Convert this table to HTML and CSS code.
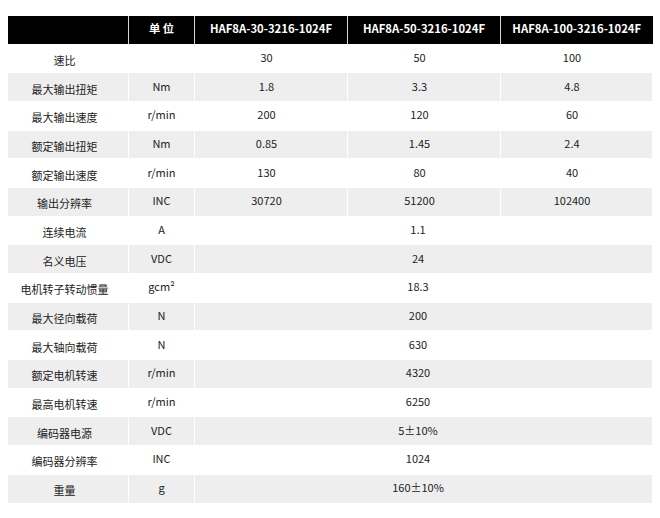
FILE: index.html
```html
<!DOCTYPE html>
<html lang="zh">
<head>
<meta charset="utf-8">
<title>HAF8A 规格参数</title>
<link rel="stylesheet" href="styles.css">
</head>
<body>
<div class="wrap">
<table class="spec">
<colgroup>
<col class="c-name"><col class="c-unit"><col class="c-val"><col class="c-val"><col class="c-last">
</colgroup>
<thead>
<tr><th></th><th>单&nbsp;位</th><th class="model">HAF8A-30-3216-1024F</th><th class="model">HAF8A-50-3216-1024F</th><th class="model">HAF8A-100-3216-1024F</th></tr>
</thead>
<tbody>
<tr><td class="name">速比</td><td class="unit"></td><td class="val">30</td><td class="val">50</td><td class="val">100</td></tr>
<tr><td class="name">最大输出扭矩</td><td class="unit">Nm</td><td class="val">1.8</td><td class="val">3.3</td><td class="val">4.8</td></tr>
<tr><td class="name">最大输出速度</td><td class="unit">r/min</td><td class="val">200</td><td class="val">120</td><td class="val">60</td></tr>
<tr><td class="name">额定输出扭矩</td><td class="unit">Nm</td><td class="val">0.85</td><td class="val">1.45</td><td class="val">2.4</td></tr>
<tr><td class="name">额定输出速度</td><td class="unit">r/min</td><td class="val">130</td><td class="val">80</td><td class="val">40</td></tr>
<tr><td class="name">输出分辨率</td><td class="unit">INC</td><td class="val">30720</td><td class="val">51200</td><td class="val">102400</td></tr>
<tr><td class="name">连续电流</td><td class="unit">A</td><td class="val span" colspan="3">1.1</td></tr>
<tr><td class="name">名义电压</td><td class="unit">VDC</td><td class="val span" colspan="3">24</td></tr>
<tr><td class="name">电机转子转动惯量</td><td class="unit">gcm²</td><td class="val span" colspan="3">18.3</td></tr>
<tr><td class="name">最大径向载荷</td><td class="unit">N</td><td class="val span" colspan="3">200</td></tr>
<tr><td class="name">最大轴向载荷</td><td class="unit">N</td><td class="val span" colspan="3">630</td></tr>
<tr><td class="name">额定电机转速</td><td class="unit">r/min</td><td class="val span" colspan="3">4320</td></tr>
<tr><td class="name">最高电机转速</td><td class="unit">r/min</td><td class="val span" colspan="3">6250</td></tr>
<tr><td class="name">编码器电源</td><td class="unit">VDC</td><td class="val span" colspan="3">5±10%</td></tr>
<tr><td class="name">编码器分辨率</td><td class="unit">INC</td><td class="val span" colspan="3">1024</td></tr>
<tr><td class="name">重量</td><td class="unit">g</td><td class="val span" colspan="3">160±10%</td></tr>
</tbody>
</table>
</div>
</body>
</html>
```
FILE: styles.css
```css
html, body {
  margin: 0;
  padding: 0;
  background: #fff;
}
body {
  font-family: "Noto Sans CJK SC", "Noto Sans", sans-serif;
  color: #222;
  font-size: 11px;
}
.wrap {
  padding: 16px 8px 0 7px;
}
.spec {
  width: 645px;
  table-layout: fixed;
  border-collapse: collapse;
}
.c-name { width: 121px; }
.c-unit { width: 66px; }
.c-val { width: 153px; }
.c-last { width: 152px; }

.spec thead tr { height: 28px; }
.spec th {
  background: #000;
  color: #fff;
  font-weight: 700;
  font-size: 11.3px;
  line-height: 14px;
  padding: 0 0 4px 0;
  border-left: 1px solid #d6d6d6;
  border-right: 1px solid #d6d6d6;
  text-align: center;
  vertical-align: middle;
  white-space: nowrap;
}
.spec th:first-child { border-left: 0; }
.spec th:last-child { border-right: 0; }

.spec tbody tr { height: 28.7px; }
.spec tbody tr:nth-child(even) td { background: #eeeeee; }
.spec td {
  border: 1px solid #fff;
  text-align: center;
  vertical-align: middle;
  padding: 0;
  line-height: 14px;
}
.spec td.name {
  padding: 3px 7px 0 0;
}
.spec td.unit {
  padding: 0 0 3px 0;
}
.spec td.val {
  padding: 0 9px 3px 0;
}
.spec td.span {
  padding-right: 11px;
}
```
